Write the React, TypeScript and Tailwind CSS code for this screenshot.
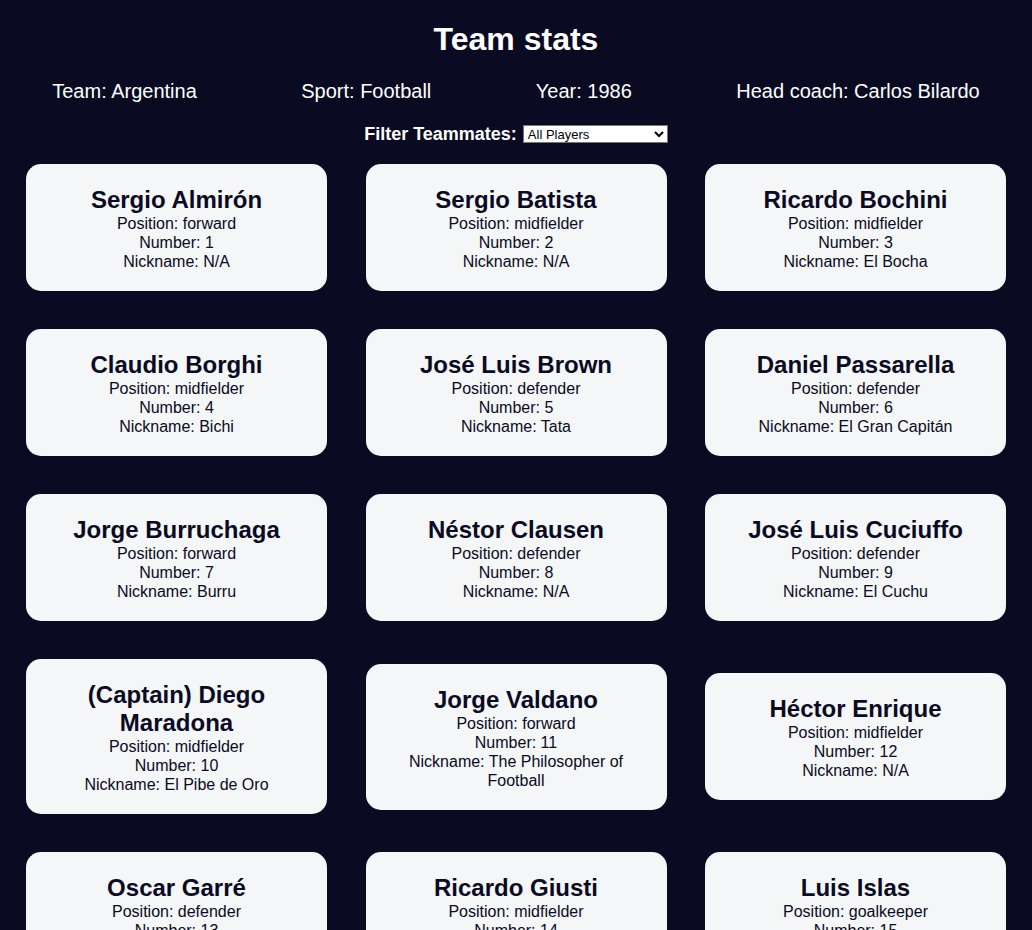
import React from "react";

type Player = { name: string; position: string; number: number; nickname: string | null; isCaptain?: boolean };

const players: Player[] = [
  { name: "Sergio Almirón", position: "forward", number: 1, nickname: null },
  { name: "Sergio Batista", position: "midfielder", number: 2, nickname: null },
  { name: "Ricardo Bochini", position: "midfielder", number: 3, nickname: "El Bocha" },
  { name: "Claudio Borghi", position: "midfielder", number: 4, nickname: "Bichi" },
  { name: "José Luis Brown", position: "defender", number: 5, nickname: "Tata" },
  { name: "Daniel Passarella", position: "defender", number: 6, nickname: "El Gran Capitán" },
  { name: "Jorge Burruchaga", position: "forward", number: 7, nickname: "Burru" },
  { name: "Néstor Clausen", position: "defender", number: 8, nickname: null },
  { name: "José Luis Cuciuffo", position: "defender", number: 9, nickname: "El Cuchu" },
  { name: "Diego Maradona", position: "midfielder", number: 10, nickname: "El Pibe de Oro", isCaptain: true },
  { name: "Jorge Valdano", position: "forward", number: 11, nickname: "The Philosopher of Football" },
  { name: "Héctor Enrique", position: "midfielder", number: 12, nickname: null },
  { name: "Oscar Garré", position: "defender", number: 13, nickname: null },
  { name: "Ricardo Giusti", position: "midfielder", number: 14, nickname: null },
  { name: "Luis Islas", position: "goalkeeper", number: 15, nickname: "El loco" },
  { name: "Julio Olarticoechea", position: "defender", number: 16, nickname: null },
  { name: "Pedro Pasculli", position: "forward", number: 17, nickname: null },
  { name: "Nery Pumpido", position: "goalkeeper", number: 18, nickname: null },
  { name: "Oscar Ruggeri", position: "defender", number: 19, nickname: "El Cabezón" },
  { name: "Carlos Tapia", position: "midfielder", number: 20, nickname: null },
  { name: "Marcelo Trobbiani", position: "midfielder", number: 21, nickname: "Calesita" },
  { name: "Héctor Zelada", position: "goalkeeper", number: 22, nickname: null },
];

function Card({ p }: { p: Player }) {
  return (
    <div className="w-[301px] rounded-[15px] bg-[#f5f6f7] px-5 pt-[22px] pb-[20px] text-center text-[#0a0a23]">
      <h2 className="text-[24px] font-bold leading-[28px]">
        {p.isCaptain ? "(Captain) " : ""}
        {p.name}
      </h2>
      <p className="text-[16px] leading-[19px]">Position: {p.position}</p>
      <p className="text-[16px] leading-[19px]">Number: {p.number}</p>
      <p className="text-[16px] leading-[19px]">Nickname: {p.nickname ?? "N/A"}</p>
    </div>
  );
}

export default function App() {
  return (
    <div className="min-h-screen bg-[#0a0a23] font-['Liberation_Sans',Arial,sans-serif] text-white">
      <h1 className="pt-[19px] text-center text-[32px] font-bold leading-[40px]">Team stats</h1>
      <div className="mt-5 flex justify-around text-[20px] leading-[24px]">
        <p>Team: Argentina</p>
        <p>Sport: Football</p>
        <p>Year: 1986</p>
        <p>Head coach: Carlos Bilardo</p>
      </div>
      <div className="mt-[21px] flex items-center justify-center gap-[6px]">
        <label htmlFor="players" className="text-[18px] font-bold leading-[20px]">
          Filter Teammates:
        </label>
        <select
          id="players"
          className="h-[18px] w-[145px] border border-[#767676] bg-white py-0 font-['Liberation_Sans',Arial,sans-serif] text-[13px] leading-[16px] text-black"
          defaultValue="all"
        >
          <option value="all">All Players</option>
          <option value="nickname">Nicknames</option>
          <option value="forward">Forward</option>
          <option value="midfielder">Midfielder</option>
          <option value="defender">Defender</option>
          <option value="goalkeeper">Goalkeeper</option>
        </select>
      </div>
      <div className="mt-5 flex flex-wrap items-center justify-between gap-y-[38px] px-[26px] pb-10">
        {players.map((p) => (
          <Card key={p.number} p={p} />
        ))}
      </div>
    </div>
  );
}
